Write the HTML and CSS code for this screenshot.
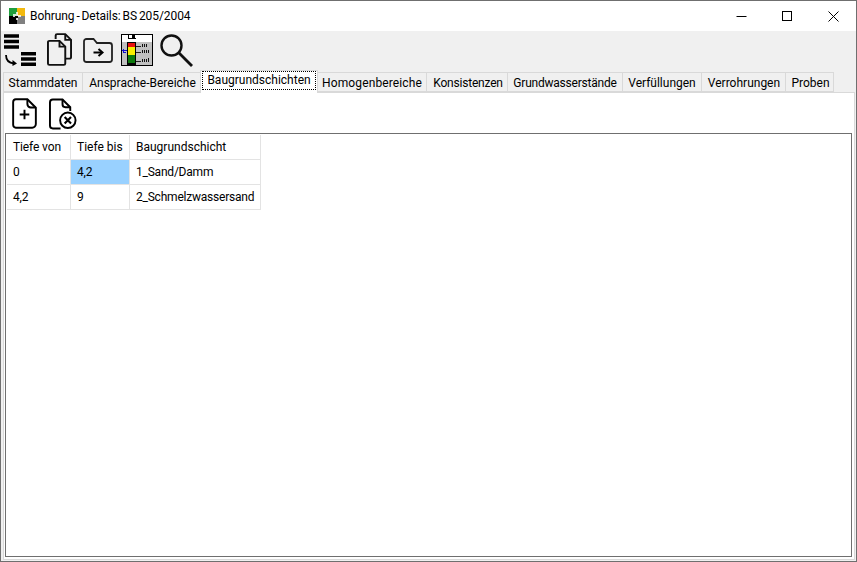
FILE: index.html
```html
<!DOCTYPE html>
<html lang="de">
<head>
<meta charset="utf-8">
<title>Bohrung - Details: BS 205/2004</title>
<link rel="stylesheet" href="styles.css">
</head>
<body>
<div class="window">
  <header class="titlebar">
    <svg class="app-icon" width="16" height="16" viewBox="0 0 16 16">
      <rect x="0" y="0" width="8" height="8" fill="#1e9e3c"/>
      <rect x="8" y="0" width="8" height="8" fill="#f2b90f"/>
      <rect x="0" y="8" width="8" height="8" fill="#000"/>
      <rect x="8" y="8" width="8" height="8" fill="#808080"/>
      <path d="M4 6h3V4h2v3h3v2H9v3H7V9H4z" fill="#fff" opacity=".8"/>
      <path d="M6 8h3v2H6z" fill="#000"/>
    </svg>
    <span class="title">Bohrung - Details: BS 205/2004</span>
    <div class="caption-buttons">
      <button class="caption-btn"><svg width="11" height="11" viewBox="0 0 11 11"><path d="M0.500 5.500h10" stroke="#000" fill="none"/></svg></button>
      <button class="caption-btn"><svg width="11" height="11" viewBox="0 0 11 11"><rect x=".5" y=".5" width="9" height="9" stroke="#000" fill="none"/></svg></button>
      <button class="caption-btn"><svg width="11" height="11" viewBox="0 0 11 11"><path d="M.5.5l10 10M10.500.5l-10 10" stroke="#000" fill="none"/></svg></button>
    </div>
  </header>

  <nav class="toolbar">
    <svg class="tool tool-sort" width="36" height="36" viewBox="0 0 36 36">
      <path d="M3 4h15M3 9.500h15M3 15h15" stroke="#000" stroke-width="3.500" fill="none"/>
      <path d="M20 21.750h15M20 27h15M20 32.250h15" stroke="#000" stroke-width="3.500" fill="none"/>
      <path d="M5 23c0 5 3 8 8 8.500" stroke="#000" stroke-width="1.800" fill="none"/>
      <path d="M11.500 28l4.500 3.500-4.500 2.500z" fill="#000"/>
    </svg>
    <svg class="tool tool-copy" width="25" height="33" viewBox="0 0 26 34">
      <path d="M9 6V2.500a1.500 1.500 0 0 1 1.500-1.500H19l6 6v18a1.500 1.500 0 0 1-1.500 1.500H19" stroke="#111" stroke-width="2" fill="none"/>
      <path d="M19 1v6h6" stroke="#111" stroke-width="2" fill="none"/>
      <path d="M2.500 8H13l6 6v17.500a1.500 1.500 0 0 1-1.500 1.500h-15A1.500 1.500 0 0 1 1 31.500v-22A1.500 1.500 0 0 1 2.500 8z" stroke="#111" stroke-width="2" fill="#f0f0f0"/>
      <path d="M13 8v6h6" stroke="#111" stroke-width="2" fill="none"/>
    </svg>
    <svg class="tool tool-folder" width="30" height="25" viewBox="0 0 30 25">
      <path d="M3.500 1h7l3.500 4h12.500a2.500 2.500 0 0 1 2.500 2.500v14a2.500 2.500 0 0 1-2.500 2.500h-23A2.500 2.500 0 0 1 1 21.500v-18A2.500 2.500 0 0 1 3.500 1z" stroke="#222" stroke-width="1.800" fill="none"/>
      <path d="M10.500 14.500h8" stroke="#000" stroke-width="2" fill="none"/>
      <path d="M15.500 11l4 3.500-4 3.500" stroke="#000" stroke-width="2" fill="none"/>
    </svg>
    <svg class="tool tool-profile" width="32" height="32" viewBox="0 0 32 32" shape-rendering="crispEdges">
      <rect x="0" y="0" width="32" height="32" fill="#000"/>
      <rect x="1" y="1" width="30" height="30" fill="#fff"/>
      <path d="M1 8h30v23H1z" fill="#c0c0c0"/>
      <rect x="7" y="1" width="1" height="3" fill="#000"/>
      <rect x="11" y="1" width="3" height="3" fill="#000"/>
      <rect x="7" y="4" width="8" height="1" fill="#000"/>
      <rect x="6" y="8" width="9" height="23" fill="#000"/>
      <rect x="7" y="9" width="7" height="4" fill="#e8110f"/>
      <rect x="7" y="13" width="7" height="8" fill="#f7ef00"/>
      <rect x="7" y="21" width="7" height="8" fill="#0c7a0c"/>
      <rect x="15" y="12" width="5" height="1" fill="#222"/>
      <rect x="15" y="18" width="5" height="1" fill="#222"/>
      <rect x="15" y="27" width="5" height="1" fill="#222"/>
      <path d="M21.500 10v3M23.500 10v3M25.500 10v3M21.500 16v3M23.500 16v3M25.500 16v3M27.500 16v3M21.500 25v3M23.500 25v3M25.500 25v3M27.500 24v4" stroke="#111" fill="none"/>
      <rect x="1" y="16" width="5" height="1" fill="#1010d0"/>
      <rect x="2" y="15" width="1" height="3" fill="#1010d0"/>
      <rect x="2" y="18" width="3" height="1" fill="#1010d0"/>
    </svg>
    <svg class="tool tool-search" width="33" height="33" viewBox="0 0 33 33">
      <circle cx="11.500" cy="11.500" r="10" stroke="#111" stroke-width="2.400" fill="none"/>
      <path d="M18.800 18.800L32 32" stroke="#111" stroke-width="2.800" fill="none"/>
    </svg>
  </nav>

  <div class="tabs">
    <div class="tab tab-1">Stammdaten</div>
    <div class="tab tab-2">Ansprache-Bereiche</div>
    <div class="tab tab-3 active"><span class="focus">Baugrundschichten</span></div>
    <div class="tab tab-4">Homogenbereiche</div>
    <div class="tab tab-5">Konsistenzen</div>
    <div class="tab tab-6">Grundwasserstände</div>
    <div class="tab tab-7">Verfüllungen</div>
    <div class="tab tab-8">Verrohrungen</div>
    <div class="tab tab-9">Proben</div>
  </div>

  <main class="panel">
    <div class="subtools">
      <svg class="sub-add" width="25" height="31" viewBox="0 0 26 32">
        <path d="M4 1.200h12l8.800 8.800v17a3.800 3.800 0 0 1-3.800 3.800H4A3 3 0 0 1 1.200 28V4A3 3 0 0 1 4 1.200z" stroke="#000" stroke-width="2" fill="none"/>
        <path d="M16 1.200v5a3.500 3.500 0 0 0 3.500 3.500h5" stroke="#000" stroke-width="2" fill="none"/>
        <path d="M13 12v10M8 17h10" stroke="#000" stroke-width="2" fill="none"/>
      </svg>
      <svg class="sub-del" width="28" height="32" viewBox="0 0 29 32">
        <path d="M12 31H4a3 3 0 0 1-3-3V4a3 3 0 0 1 3-3h10l8 8v4" stroke="#000" stroke-width="2" fill="none"/>
        <path d="M14 1v5a3 3 0 0 0 3 3h5" stroke="#000" stroke-width="2" fill="none"/>
        <circle cx="19.500" cy="22.500" r="8" stroke="#000" stroke-width="2" fill="#fff"/>
        <path d="M16.200 19.200l6.600 6.600M22.800 19.200l-6.600 6.600" stroke="#000" stroke-width="2.200" fill="none"/>
      </svg>
    </div>
    <section class="gridbox">
      <table class="grid">
        <colgroup><col class="c1"><col class="c2"><col class="c3"></colgroup>
        <thead>
          <tr><th>Tiefe von</th><th>Tiefe bis</th><th>Baugrundschicht</th></tr>
        </thead>
        <tbody>
          <tr><td>0</td><td class="selected">4,2</td><td>1_Sand/Damm</td></tr>
          <tr><td>4,2</td><td>9</td><td>2_Schmelzwassersand</td></tr>
        </tbody>
      </table>
    </section>
  </main>
</div>
</body>
</html>
```
FILE: styles.css
```css
* { box-sizing: border-box; }
html, body { margin: 0; padding: 0; height: 100%; }
body {
  font-family: Roboto, "Noto Sans", sans-serif;
  font-size: 12px;
  color: #000;
  background: #f0f0f0;
  overflow: hidden;
}
.window {
  width: 857px;
  height: 562px;
  display: flex;
  flex-direction: column;
  background: #f0f0f0;
  border: 1px solid #6f6f6f;
}
.titlebar {
  height: 30px;
  flex: none;
  background: #fff;
  display: flex;
  align-items: center;
  padding-left: 8px;
}
.app-icon { flex: none; }
.title { margin-left: 5px; font-size: 12px; word-spacing: -1px; letter-spacing: -0.07px; }
.caption-buttons { margin-left: auto; display: flex; }
.caption-btn {
  width: 46px;
  height: 30px;
  padding: 0;
  border: 0;
  background: none;
  display: flex;
  align-items: center;
  justify-content: center;
}
.toolbar {
  height: 39px;
  flex: none;
  background: #f0f0f0;
  display: flex;
  align-items: flex-start;
}
.tool { flex: none; display: block; }
.tool-sort { margin-top: 1px; }
.tool-copy { margin: 2px 0 0 10px; }
.tool-folder { margin: 7px 0 0 11px; }
.tool-profile { margin: 3px 0 0 8px; }
.tool-search { margin: 3px 0 0 7px; }

.tabs {
  height: 22px;
  flex: none;
  display: flex;
  align-items: flex-end;
  padding-left: 2px;
  background: #f0f0f0;
}
.tab {
  height: 20px;
  flex: none;
  display: flex;
  align-items: center;
  justify-content: center;
  padding-top: 1px;
  line-height: 18px;
  background: #f0f0f0;
  border: 1px solid #d9d9d9;
  margin-right: -1px;
  white-space: nowrap;
}
.tab-1 { width: 80px; }
.tab-2 { width: 119px; padding-left: 2px; }
.tab-3 { width: 118px; }
.tab-4 { width: 110px; letter-spacing: 0.12px; }
.tab-5 { width: 82px; letter-spacing: -0.2px; padding-left: 2px; }
.tab-6 { width: 116px; letter-spacing: -0.22px; }
.tab-7 { width: 80px; }
.tab-8 { width: 85px; padding-left: 1px; }
.tab-9 { width: 49px; padding-left: 2px; }
.tab.active {
  height: 23px;
  background: #fff;
  border-bottom: 0;
  align-items: flex-start;
  padding-top: 1px;
  position: relative;
  z-index: 1;
  margin-bottom: -1px;
}
.focus {
  display: block;
  outline: 1px dotted #000;
  outline-offset: 0;
  padding: 0 4px;
  line-height: 17px;
}

.panel {
  flex: 1;
  min-height: 0;
  margin: 0 1px 1px 2px;
  background: #fff;
  border: 1px solid #d9d9d9;
  display: flex;
  flex-direction: column;
  padding: 0 2px 2px 1px;
}
.subtools {
  height: 40px;
  flex: none;
  display: flex;
  align-items: flex-start;
  padding: 5px 0 0 7px;
}
.sub-add { flex: none; }
.sub-del { flex: none; margin-left: 12px; }
.gridbox {
  flex: 1;
  min-height: 0;
  border: 1px solid #6f6f6f;
  background: #fff;
  padding: 1px 0 0 1px;
}
.grid {
  border-collapse: separate;
  border-spacing: 0;
  table-layout: fixed;
  width: 254px;
  font-size: 12px;
}
.c1 { width: 64px; }
.c2 { width: 59px; }
.c3 { width: 131px; }
.grid th, .grid td {
  height: 25px;
  padding: 0 0 0 6px;
  font-weight: 400;
  text-align: left;
  border-right: 1px solid #e3e3e3;
  border-bottom: 1px solid #e3e3e3;
  white-space: nowrap;
}
.grid th:first-child { letter-spacing: -0.12px; }
.grid td { letter-spacing: -0.22px; }
.grid .selected { background: #99d1ff; }
```
